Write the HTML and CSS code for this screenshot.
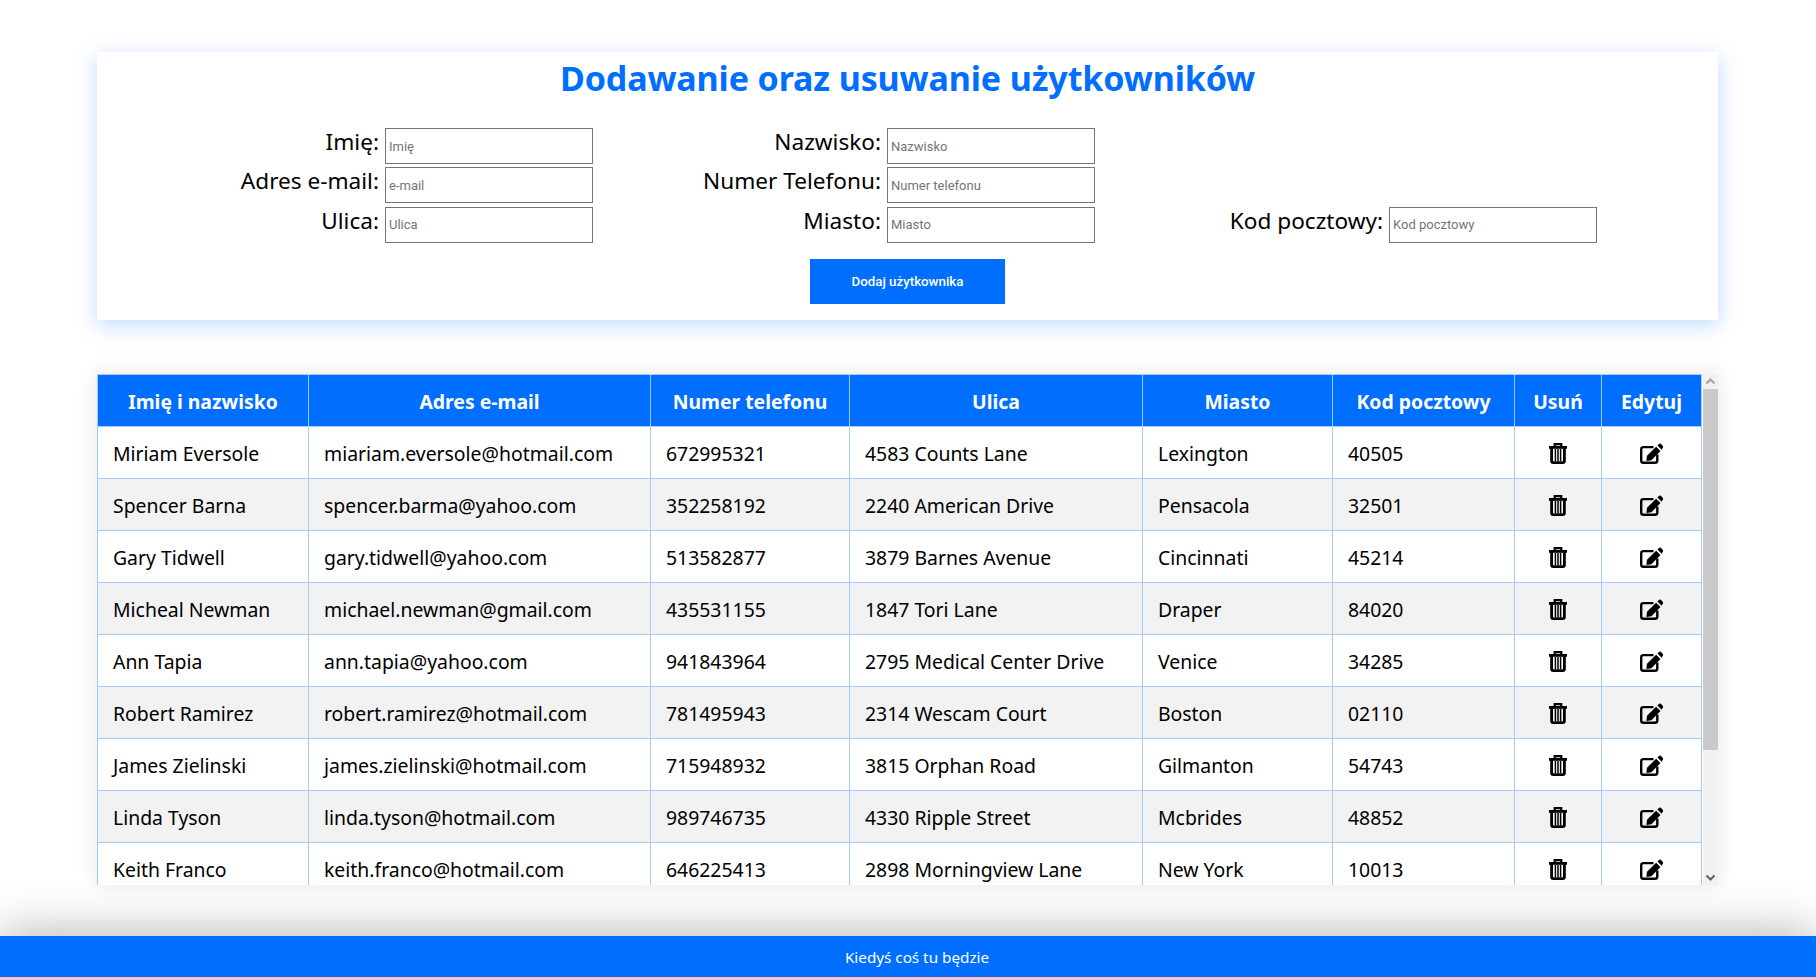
FILE: index.html
```html
<!DOCTYPE html>
<html>
<head>
    <title>Dodawanie oraz usuwanie użytkowników</title>
    <meta charset="UTF-8">
    <link rel="stylesheet" href="styles.css">
</head>
<body>
    <svg class="icon-defs" width="0" height="0">
        <symbol id="icon-trash" viewBox="0 0 18 21">
            <path d="M5.7 3.5V1.2H12.3V3.5" fill="none" stroke="currentColor" stroke-width="2.2"/>
            <rect x="0" y="3" width="18" height="2.8"/>
            <path d="M2.6 5V18Q2.6 19.6 4.2 19.6H13.8Q15.4 19.6 15.4 18V5" fill="none" stroke="currentColor" stroke-width="2.8"/>
            <path d="M6.4 6V18M9 6V18M11.6 6V18" fill="none" stroke="currentColor" stroke-width="1.5"/>
        </symbol>
        <symbol id="icon-edit" viewBox="0 0 23 21">
            <path d="M13.5 4.1H3.5Q1.2 4.1 1.2 6.4V17.5Q1.2 19.8 3.5 19.8H15Q17.3 19.8 17.3 17.5V11.5" fill="none" stroke="currentColor" stroke-width="2.4"/>
            <path d="M6.4 18L7 12.8L16.1 3.7L20.5 8.1L11.4 17.3Z"/>
            <path d="M17.4 2.5L19.2 .8Q20 .1 20.8 .8L22.9 2.9Q23.4 3.6 22.9 4.4L21.7 6.8Z"/>
        </symbol>
    </svg>

    <main class="page">
        <section class="card">
            <h1>Dodawanie oraz usuwanie użytkowników</h1>
            <form class="user-form">
                <div class="fields">
                    <label class="field">Imię: <input type="text" placeholder="Imię"></label>
                    <label class="field">Nazwisko: <input type="text" placeholder="Nazwisko"></label>
                    <div></div>
                    <label class="field">Adres e-mail: <input type="text" placeholder="e-mail"></label>
                    <label class="field">Numer Telefonu: <input type="text" placeholder="Numer telefonu"></label>
                    <div></div>
                    <label class="field">Ulica: <input type="text" placeholder="Ulica"></label>
                    <label class="field">Miasto: <input type="text" placeholder="Miasto"></label>
                    <label class="field">Kod pocztowy: <input type="text" placeholder="Kod pocztowy"></label>
                </div>
                <button type="button" class="add-btn">Dodaj użytkownika</button>
            </form>
        </section>

        <section class="table-wrap">
            <div class="table-scroll">
                <table>
                    <colgroup>
                        <col class="col-name"><col class="col-mail"><col class="col-phone"><col class="col-street">
                        <col class="col-city"><col class="col-zip"><col class="col-del"><col class="col-edit">
                    </colgroup>
                    <thead>
                        <tr>
                            <th>Imię i nazwisko</th><th>Adres e-mail</th><th>Numer telefonu</th><th>Ulica</th>
                            <th>Miasto</th><th>Kod pocztowy</th><th>Usuń</th><th>Edytuj</th>
                        </tr>
                    </thead>
                    <tbody>
                        <tr><td>Miriam Eversole</td><td>miariam.eversole@hotmail.com</td><td>672995321</td><td>4583 Counts Lane</td><td>Lexington</td><td>40505</td><td class="action"><svg class="trash"><use href="#icon-trash"/></svg></td><td class="action"><svg class="edit"><use href="#icon-edit"/></svg></td></tr>
                        <tr><td>Spencer Barna</td><td>spencer.barma@yahoo.com</td><td>352258192</td><td>2240 American Drive</td><td>Pensacola</td><td>32501</td><td class="action"><svg class="trash"><use href="#icon-trash"/></svg></td><td class="action"><svg class="edit"><use href="#icon-edit"/></svg></td></tr>
                        <tr><td>Gary Tidwell</td><td>gary.tidwell@yahoo.com</td><td>513582877</td><td>3879 Barnes Avenue</td><td>Cincinnati</td><td>45214</td><td class="action"><svg class="trash"><use href="#icon-trash"/></svg></td><td class="action"><svg class="edit"><use href="#icon-edit"/></svg></td></tr>
                        <tr><td>Micheal Newman</td><td>michael.newman@gmail.com</td><td>435531155</td><td>1847 Tori Lane</td><td>Draper</td><td>84020</td><td class="action"><svg class="trash"><use href="#icon-trash"/></svg></td><td class="action"><svg class="edit"><use href="#icon-edit"/></svg></td></tr>
                        <tr><td>Ann Tapia</td><td>ann.tapia@yahoo.com</td><td>941843964</td><td>2795 Medical Center Drive</td><td>Venice</td><td>34285</td><td class="action"><svg class="trash"><use href="#icon-trash"/></svg></td><td class="action"><svg class="edit"><use href="#icon-edit"/></svg></td></tr>
                        <tr><td>Robert Ramirez</td><td>robert.ramirez@hotmail.com</td><td>781495943</td><td>2314 Wescam Court</td><td>Boston</td><td>02110</td><td class="action"><svg class="trash"><use href="#icon-trash"/></svg></td><td class="action"><svg class="edit"><use href="#icon-edit"/></svg></td></tr>
                        <tr><td>James Zielinski</td><td>james.zielinski@hotmail.com</td><td>715948932</td><td>3815 Orphan Road</td><td>Gilmanton</td><td>54743</td><td class="action"><svg class="trash"><use href="#icon-trash"/></svg></td><td class="action"><svg class="edit"><use href="#icon-edit"/></svg></td></tr>
                        <tr><td>Linda Tyson</td><td>linda.tyson@hotmail.com</td><td>989746735</td><td>4330 Ripple Street</td><td>Mcbrides</td><td>48852</td><td class="action"><svg class="trash"><use href="#icon-trash"/></svg></td><td class="action"><svg class="edit"><use href="#icon-edit"/></svg></td></tr>
                        <tr><td>Keith Franco</td><td>keith.franco@hotmail.com</td><td>646225413</td><td>2898 Morningview Lane</td><td>New York</td><td>10013</td><td class="action"><svg class="trash"><use href="#icon-trash"/></svg></td><td class="action"><svg class="edit"><use href="#icon-edit"/></svg></td></tr>
                    </tbody>
                </table>
            </div>
            <div class="scrollbar">
                <svg class="scroll-arrow up" viewBox="0 0 15 15"><path d="M3.5 9.5L7.5 5.5L11.5 9.5" fill="none" stroke="currentColor" stroke-width="2"/></svg>
                <div class="scroll-thumb"></div>
                <svg class="scroll-arrow down" viewBox="0 0 15 15"><path d="M3.5 5.5L7.5 9.5L11.5 5.5" fill="none" stroke="currentColor" stroke-width="2"/></svg>
            </div>
        </section>
    </main>

    <footer class="footer">Kiedyś coś tu będzie</footer>
</body>
</html>
```

FILE: styles.css
```css
html, body {
    height: 100%;
}
body {
    margin: 0;
    display: flex;
    flex-direction: column;
    font-family: "Noto Sans", "Open Sans", sans-serif;
    color: #000;
    background: #fff;
    overflow: hidden;
}
.icon-defs {
    position: absolute;
}
.page {
    flex: 1;
    padding: 52px 98px 0 97px;
}
.card {
    height: 268px;
    box-shadow: 0 5px 20px rgba(0, 110, 255, 0.25);
    background: #fff;
}
h1 {
    margin: 0;
    padding-top: 1px;
    height: 75px;
    text-align: center;
    font-size: 34px;
    letter-spacing: -0.12px;
    line-height: 50px;
    font-weight: 700;
    color: #006eff;
}
.user-form {
    display: flex;
    flex-direction: column;
    align-items: center;
}
.fields {
    align-self: flex-start;
    display: grid;
    grid-template-columns: repeat(3, 420px);
    grid-auto-rows: 36px;
    column-gap: 82px;
    row-gap: 3.4px;
    padding-left: 76px;
}
.field {
    display: flex;
    justify-content: flex-end;
    align-items: flex-start;
    gap: 6px;
    font-size: 22.6px;
    line-height: 28px;
}
.field input {
    box-sizing: border-box;
    width: 208px;
    height: 36px;
    padding: 0 3px;
    border: 1px solid #767676;
    border-radius: 0;
    font-family: Roboto, "Liberation Sans", sans-serif;
    font-size: 13px;
}
.field input::placeholder {
    color: #757575;
}
.add-btn {
    width: 195px;
    height: 45px;
    margin-top: 16px;
    border: none;
    background: #006eff;
    color: #fff;
    font-family: Roboto, "Liberation Sans", sans-serif;
    font-size: 13.3px;
    font-weight: 500;
}
.table-wrap {
    display: flex;
    height: 511px;
    margin-top: 54px;
    box-shadow: 0 0 20px rgba(0, 0, 0, 0.1);
}
.table-scroll {
    flex: 1;
    overflow: hidden;
}
.scrollbar {
    width: 15px;
    display: flex;
    flex-direction: column;
    background: #f1f1f1;
}
.scroll-arrow {
    width: 15px;
    height: 15px;
    flex: none;
}
.scroll-arrow.up {
    color: #a3a3a3;
}
.scroll-arrow.down {
    margin-top: auto;
    color: #606060;
}
.scroll-thumb {
    height: 361px;
    background: #c9c9c9;
}
table {
    width: 1605px;
    table-layout: fixed;
    border-collapse: collapse;
    font-size: 19.4px;
}
.col-name { width: 211px; }
.col-mail { width: 342px; }
.col-phone { width: 199px; }
.col-street { width: 293px; }
.col-city { width: 190px; }
.col-zip { width: 182px; }
.col-del { width: 87px; }
.col-edit { width: 100px; }
th, td {
    height: 52px;
    box-sizing: border-box;
    padding: 1px 15px 0;
    border: 1px solid #a6c9ff;
    white-space: nowrap;
}
th {
    background: #006eff;
    color: #fff;
    font-weight: 700;
}
tbody tr:nth-child(even) {
    background: #f2f2f2;
}
td.action {
    padding: 1px 0 0;
}
.trash, .edit {
    display: block;
    height: 21px;
    margin: 0 auto;
    fill: currentColor;
}
.trash { width: 18px; }
.edit { width: 23px; }
.footer {
    position: relative;
    height: 41px;
    padding: 1px 0 0 18px;
    box-sizing: border-box;
    background: #006eff;
    color: #fff;
    text-align: center;
    font-size: 15.25px;
    line-height: 41px;
    box-shadow: 0 0 50px rgba(0, 0, 0, 0.35);
}
```
